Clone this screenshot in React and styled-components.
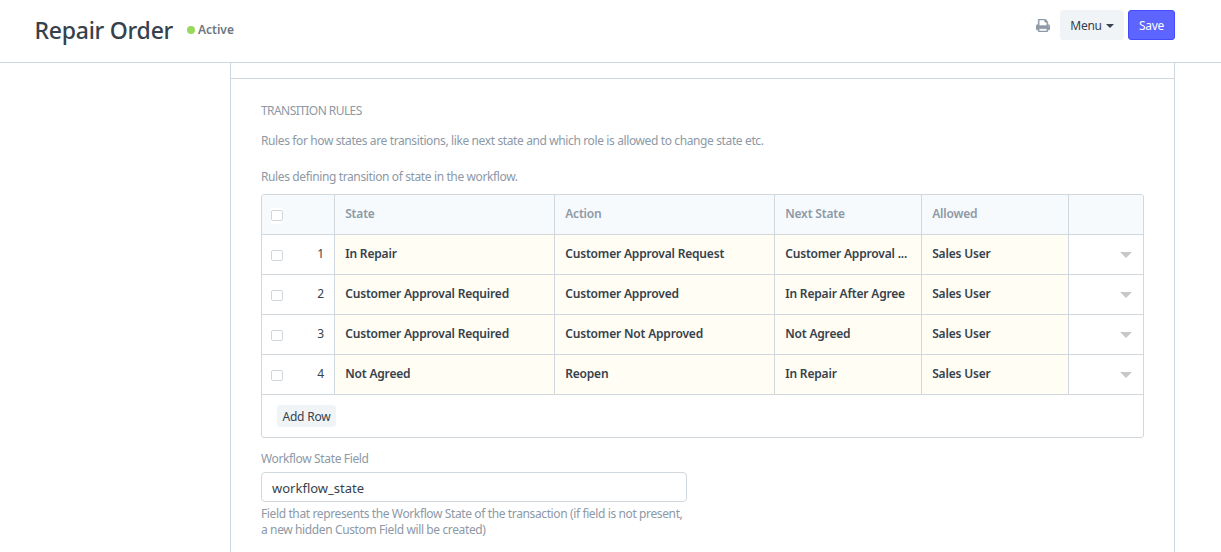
import React from "react";
import styled, { createGlobalStyle } from "styled-components";

const line = "#d1d8dd";
const muted = "#8d99a6";
const ink = "#36414c";

const Global = createGlobalStyle`
  * { box-sizing: border-box; }
  body {
    margin: 0;
    background: #fff;
    color: ${ink};
    font: 12px/16px "Noto Sans", "Open Sans", sans-serif;
    overflow: hidden;
  }
`;

const Page = styled.div`
  height: 552px;
  display: flex;
  flex-direction: column;
  overflow: hidden;
`;

const Header = styled.header`
  flex: none;
  height: 63px;
  border-bottom: 1px solid ${line};
  padding: 10px 46px 0 34.5px;
  display: flex;
  align-items: flex-start;
`;

const Title = styled.h1`
  margin: 4px 0 0;
  font-size: 23px;
  line-height: 32px;
  font-weight: 500;
  white-space: nowrap;
  width: 152.5px;
  letter-spacing: -0.25px;
`;

const Status = styled.div`
  display: flex;
  align-items: center;
  gap: 3px;
  margin-top: 12px;
  color: #6c7680;
  font-weight: 600;
`;

const Dot = styled.span`
  width: 8px;
  height: 8px;
  border-radius: 50%;
  background: #98d85b;
`;

const Actions = styled.div`
  margin-left: auto;
  display: flex;
  align-items: center;
`;

const PrintIcon = styled.svg`
  width: 14px;
  height: 13px;
  margin: 1px 10px 0 0;
  display: block;
`;

const Button = styled.button`
  font: inherit;
  letter-spacing: -0.25px;
  height: 30px;
  width: ${(p) => p.$width}px;
  margin-left: ${(p) => p.$gap || 0}px;
  padding: 1px 0 0;
  border-radius: 3px;
  display: flex;
  align-items: center;
  justify-content: center;
  gap: 4px;
  color: ${(p) => (p.$primary ? "#fff" : ink)};
  background: ${(p) => (p.$primary ? "#5e64ff" : "#f0f4f7")};
  border: 1px solid ${(p) => (p.$primary ? "#444bff" : "#f0f4f7")};
`;

const Caret = styled.span`
  margin-top: 1px;
  border: 4px solid transparent;
  border-top-color: ${ink};
  border-bottom: 0;
`;

const Form = styled.main`
  flex: 1;
  width: 945px;
  margin-left: 230px;
  border: solid ${line};
  border-width: 0 1px;
`;

const PreviousSection = styled.div`
  height: 16px;
  border-bottom: 1px solid ${line};
`;

const Section = styled.section`
  padding: 24px 30px 0;
`;

const Text = styled.p`
  margin: ${(p) => p.$top || 0}px 0 0;
  color: ${muted};
  white-space: nowrap;
  letter-spacing: ${(p) => p.$track || -0.38}px;
`;

const Grid = styled.div`
  width: 883px;
  margin-top: 9px;
  border: 1px solid ${line};
  border-radius: 3px;
  overflow: hidden;
`;

const Row = styled.div`
  display: grid;
  grid-template-columns: 73px 220px 220px 147px 147px 74px;
  height: 40px;
  border-bottom: 1px solid ${line};
  background: ${(p) => (p.$head ? "#f7fafc" : "#fff")};
`;

const Cell = styled.div`
  border-right: 1px solid ${line};
  padding: 11px 0 0 10.2px;
  letter-spacing: -0.18px;
  font-weight: 600;
  color: ${(p) => (p.$head ? muted : ink)};
  background: ${(p) => (p.$head ? "transparent" : "#fffdf4")};
  white-space: nowrap;
`;

const IndexCell = styled.div`
  border-right: 1px solid ${line};
  display: flex;
  justify-content: space-between;
  padding: 11px 10px 0 9px;
`;

const Check = styled.span`
  width: 12px;
  height: 11px;
  margin-top: 4px;
  border: 1px solid ${line};
  border-radius: 2px;
  background: #fff;
  box-shadow: 0 -2px #fff, 0 3px #fff;
`;

const OpenCell = styled.div`
  display: flex;
  justify-content: flex-end;
  padding: 17px 11px 0 0;
`;

const OpenMark = styled.span`
  height: 0;
  border: 6px solid transparent;
  border-top-color: #c8c8c8;
  border-bottom: 0;
`;

const Footer = styled.div`
  height: 42px;
  padding: 10px 15px;
`;

const AddRow = styled.button`
  font: inherit;
  letter-spacing: -0.2px;
  color: ${ink};
  background: #f0f4f7;
  border: 0;
  border-radius: 3px;
  width: 59px;
  height: 22px;
  padding: 1px 0 0;
  white-space: nowrap;
`;

const Field = styled.div`
  width: 426px;
  height: 30px;
  margin: 5px 0 4px;
  padding: 6px 10px 0;
  border: 1px solid ${line};
  border-radius: 4px;
  font-size: 13px;
  line-height: 18px;
`;

const rows = [
  ["In Repair", "Customer Approval Request", "Customer Approval ...", "Sales User"],
  ["Customer Approval Required", "Customer Approved", "In Repair After Agree", "Sales User"],
  ["Customer Approval Required", "Customer Not Approved", "Not Agreed", "Sales User"],
  ["Not Agreed", "Reopen", "In Repair", "Sales User"],
];

export default function App() {
  return (
    <Page>
      <Global />
      <Header>
        <Title>Repair Order</Title>
        <Status>
          <Dot />
          Active
        </Status>
        <Actions>
          <PrintIcon viewBox="0 0 1664 1536" fill={muted} stroke={muted} strokeWidth="50">
            <path d="M384 1408h896v-256H384v256zm0-640h896V384h-160q-40 0-68-28t-28-68V128H384v640zm1152 64q0-26-19-45t-45-19-45 19-19 45 19 45 45 19 45-19 19-45zm128 0v416q0 13-9.500 22.500t-22.500 9.500h-224v160q0 40-28 68t-68 28H352q-40 0-68-28t-28-68v-160H32q-13 0-22.500-9.500T0 1248V832q0-79 56.500-135.500T192 640h64V96q0-40 28-68t68-28h672q40 0 88 20t76 48l152 152q28 28 48 76t20 88v256h64q79 0 135.500 56.500T1664 832z" />
          </PrintIcon>
          <Button $width={64}>
            Menu
            <Caret />
          </Button>
          <Button $primary $width={47} $gap={4}>
            Save
          </Button>
        </Actions>
      </Header>
      <Form>
        <PreviousSection />
        <Section>
          <Text $track={-0.56}>TRANSITION RULES</Text>
          <Text $top={14}>
            Rules for how states are transitions, like next state and which role is allowed to change state etc.
          </Text>
          <Text $top={20}>Rules defining transition of state in the workflow.</Text>
          <Grid>
            <Row $head>
              <IndexCell>
                <Check />
              </IndexCell>
              {["State", "Action", "Next State", "Allowed"].map((name) => (
                <Cell $head key={name}>{name}</Cell>
              ))}
            </Row>
            {rows.map((row, i) => (
              <Row key={i}>
                <IndexCell>
                  <Check />
                  {i + 1}
                </IndexCell>
                {row.map((value, j) => (
                  <Cell key={j}>{value}</Cell>
                ))}
                <OpenCell>
                  <OpenMark />
                </OpenCell>
              </Row>
            ))}
            <Footer>
              <AddRow>Add Row</AddRow>
            </Footer>
          </Grid>
          <Text $top={13} $track={-0.36}>Workflow State Field</Text>
          <Field>workflow_state</Field>
          <Text>
            Field that represents the Workflow State of the transaction (if field is not present,
            <br />a new hidden Custom Field will be created)
          </Text>
        </Section>
      </Form>
    </Page>
  );
}
